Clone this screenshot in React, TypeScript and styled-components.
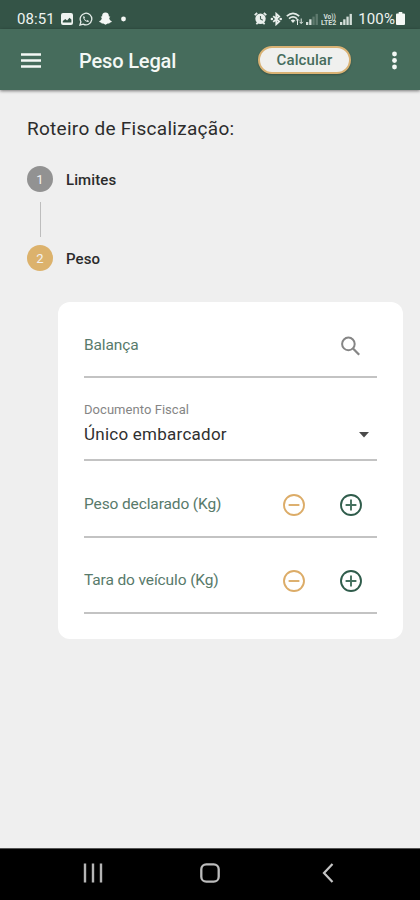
import React from "react";
import styled, { createGlobalStyle } from "styled-components";

const Global = createGlobalStyle`
  * { box-sizing: border-box; }
  body { margin: 0; background: #efefef; font-family: Roboto, sans-serif; }
`;

const Screen = styled.div`
  width: 420px;
  height: 900px;
  display: flex;
  flex-direction: column;
  overflow: hidden;
  background: #efefef;
`;

const StatusBar = styled.div`
  height: 29px;
  flex: none;
  display: flex;
  align-items: center;
  justify-content: space-between;
  padding: 8px 15px 0 17px;
  background: #345447;
  color: #eef3f0;
`;

const StatusGroup = styled.div<{ $gap: number }>`
  display: flex;
  align-items: center;
  gap: ${(p) => p.$gap}px;
  svg { display: block; }
`;

const StatusText = styled.span<{ $spacing: number }>`
  font-size: 15px;
  line-height: 18px;
  letter-spacing: ${(p) => p.$spacing}px;
  white-space: nowrap;
`;

const AppBar = styled.header`
  height: 61px;
  flex: none;
  display: flex;
  align-items: center;
  padding: 0 16px 0 21px;
  background: #466c5c;
  color: #f4f8f5;
  box-shadow: 0 1px 3px rgba(0, 0, 0, 0.5);
  z-index: 1;
`;

const IconButton = styled.button<{ $w: number; $h: number }>`
  width: ${(p) => p.$w}px;
  height: ${(p) => p.$h}px;
  padding: 0;
  border: 0;
  background: none;
  color: inherit;
  svg { display: block; }
`;

const Title = styled.h1`
  flex: 1;
  margin: 2px 0 0 38px;
  font-size: 20px;
  line-height: 24px;
  font-weight: 500;
  letter-spacing: -0.15px;
`;

const CalcButton = styled.button`
  width: 93px;
  height: 28px;
  margin-right: 35px;
  padding: 1px 0 0;
  border: 2px solid #d9b274;
  border-radius: 14px;
  background: #f0f0ee;
  color: #466c5c;
  font: 500 15px/20px Roboto, sans-serif;
  letter-spacing: 0.1px;
  box-shadow: 0 1px 2px rgba(0, 0, 0, 0.25);
`;

const Content = styled.main`
  flex: 1;
  display: flex;
  flex-direction: column;
  padding: 27px 17px 0 27px;
`;

const Heading = styled.h2`
  margin: 0;
  font-size: 19px;
  line-height: 24px;
  font-weight: 400;
  letter-spacing: 0.28px;
  color: #2c2c2c;
`;

const Step = styled.div<{ $top?: number }>`
  display: flex;
  align-items: center;
  gap: 13px;
  height: 26px;
  margin-top: ${(p) => p.$top ?? 0}px;
`;

const StepBadge = styled.span<{ $active?: boolean }>`
  width: 26px;
  height: 26px;
  border-radius: 50%;
  background: ${(p) => (p.$active ? "#dcb26c" : "#929292")};
  color: #f3f3f3;
  font-size: 13px;
  line-height: 27px;
  text-align: center;
`;

const StepLabel = styled.span`
  padding-top: 2px;
  font-size: 15px;
  font-weight: 500;
  line-height: 20px;
  letter-spacing: 0.1px;
  color: #2b2b2b;
`;

const StepLine = styled.div`
  width: 1px;
  height: 35px;
  margin: 10px 0 8px 13px;
  background: #bdbdbd;
`;

const Card = styled.section`
  width: 345px;
  height: 337px;
  margin: 31px 0 0 31px;
  padding: 0 26px;
  border-radius: 12px;
  background: #fff;
`;

const Field = styled.div<{ $height: number; $pad: number }>`
  height: ${(p) => p.$height}px;
  padding: 0 14px ${(p) => p.$pad}px 0;
  border-bottom: 2px solid #c3c3c3;
  display: flex;
  align-items: flex-end;
  justify-content: space-between;
`;

const FieldLabel = styled.label`
  font-size: 15.5px;
  line-height: 25px;
  letter-spacing: -0.12px;
  color: #587a6b;
`;

const SelectText = styled.div`
  display: flex;
  flex-direction: column;
`;

const SmallLabel = styled.span`
  font-size: 13px;
  line-height: 20px;
  letter-spacing: 0.05px;
  color: #858585;
`;

const SelectValue = styled.span`
  font-size: 17px;
  line-height: 28px;
  letter-spacing: 0.25px;
  color: #303030;
`;

const CaretBox = styled.span`
  display: flex;
  align-items: center;
  height: 26px;
  margin-right: -6px;
`;

const Actions = styled.div`
  display: flex;
  gap: 33px;
`;

const NavBar = styled.nav`
  height: 52px;
  flex: none;
  display: grid;
  grid-template-columns: 20px 20px 12px;
  align-items: center;
  column-gap: 97px;
  padding: 0 0 3px 83px;
  border-top: 1px solid #555;
  background: #000;
  svg { display: block; }
`;

const BackIcon = styled.span`
  padding-left: 5px;
`;

const Svg = ({ w, h, children }: { w: number; h: number; children: React.ReactNode }) => (
  <svg width={w} height={h} viewBox={`0 0 ${w} ${h}`} fill="none">{children}</svg>
);

const Signal = ({ level }: { level: number }) => (
  <Svg w={13} h={12}>
    {[0, 1, 2, 3].map((i) => (
      <rect key={i} x={i * 3.2} y={9 - i * 2.7} width="2.3" height={3 + i * 2.7}
        fill={i < level ? "#d5dfda" : "#5f7a6e"} />
    ))}
  </Svg>
);

const RoundIcon = ({ plus }: { plus?: boolean }) => (
  <IconButton $w={24} $h={24} aria-label={plus ? "Aumentar" : "Diminuir"}>
    <Svg w={24} h={24}>
      <circle cx="12" cy="12" r="10" stroke={plus ? "#2f5c4b" : "#dcac68"} strokeWidth="1.9" />
      <path d={plus ? "M6.6 12H17.4M12 6.6V17.4" : "M6.6 12H17.4"}
        stroke={plus ? "#467260" : "#dcac68"} strokeWidth="1.9" />
    </Svg>
  </IconButton>
);

const Stepper = ({ label, height }: { label: string; height: number }) => (
  <Field $height={height} $pad={19}>
    <FieldLabel>{label}</FieldLabel>
    <Actions>
      <RoundIcon />
      <RoundIcon plus />
    </Actions>
  </Field>
);

export default function App() {
  return (
    <Screen>
      <Global />
      <StatusBar>
        <StatusGroup $gap={6}>
          <StatusText $spacing={0.1}>08:51</StatusText>
          <Svg w={12} h={12}>
            <path fillRule="evenodd" d="M2 0h8a2 2 0 0 1 2 2v8a2 2 0 0 1-2 2H2a2 2 0 0 1-2-2V2a2 2 0 0 1 2-2ZM1.8 9.4h8.6V6.5L8.5 4.8 6.1 7.6 4.3 6 1.8 8Z" fill="#eef3f0" />
          </Svg>
          <Svg w={14} h={14}>
            <path d="M1 13 1.9 9.8A5.8 5.8 0 1 1 4.2 12.1Z" stroke="#e4ece8" strokeWidth="1.3" />
            <path d="M4.8 3.8C3.4 5.2 4.6 7.3 5.8 8.4S9 10.7 10.2 9.2L8.6 8.1 7.7 8.8C6.5 8.2 5.9 7.5 5.4 6.5L6 5.5Z" fill="#e4ece8" />
          </Svg>
          <Svg w={13} h={13}>
            <path d="M6.5.5C8.8.5 10 2.2 9.9 4.4L11.3 4.5 10.2 6.3C10.5 7.8 11.5 8.8 12.8 9.3L12.5 10.1 10.8 10.7 10.2 11.6H8.7L6.5 12.8 4.3 11.6H2.8L2.2 10.7.5 10.1.2 9.3C1.5 8.8 2.5 7.8 2.8 6.3L1.7 4.5 3.1 4.4C3 2.2 4.2.5 6.5.5Z" fill="#f4f7f5" />
          </Svg>
          <Svg w={13} h={6}><circle cx="5.5" cy="3" r="2.4" fill="#f4f7f5" /></Svg>
        </StatusGroup>
        <StatusGroup $gap={2}>
          <Svg w={13} h={13}>
            <path d="M.7 3.2 3.2 1M12.3 3.2 9.8 1M2.4 12.3l1.3-1.6M10.6 12.3l-1.3-1.6" stroke="#e9efec" strokeWidth="1.7" />
            <circle cx="6.5" cy="6.8" r="5.2" fill="#e9efec" />
            <path d="M6.5 3.9V7L8.8 8.3" stroke="#48665a" strokeWidth="1.1" />
          </Svg>
          <Svg w={15} h={14}>
            <path d="M4.2 4.1 10.2 9.6 7.3 12.2V1.8L10.2 4.4 4.2 9.9" stroke="#e9efec" strokeWidth="1.8" />
            <circle cx="2.900" cy="7" r="1.3" fill="#e9efec" /><circle cx="11.700" cy="7" r="1.3" fill="#e9efec" />
          </Svg>
          <Svg w={18} h={13}>
            <path d="M.8 4.2C4.8.6 9.2.6 13.2 4.2M3 6.6C5.8 4.2 8.2 4.2 11 6.6" stroke="#e4ebe7" strokeWidth="1.7" />
            <path d="M4.8 8.4C6.5 7.1 7.5 7.1 9.2 8.4L7 11Z" fill="#e4ebe7" />
            <path d="M11.500 7v6M9.800 8.700 11.500 7l1.700 1.700M15.200 6.500v5M13.500 9.800 15.200 11.500l1.700-1.700" stroke="#e4ebe7" strokeWidth="1" />
          </Svg>
          <Signal level={2} />
          <Svg w={17} h={14}>
            <text x="2.500" y="6.500" fill="#d5dfda" fontFamily="Roboto, sans-serif" fontSize="6.5" fontWeight="700">Vo))</text>
            <text x="0" y="13" fill="#d5dfda" fontFamily="Roboto, sans-serif" fontSize="7" fontWeight="700">LTE2</text>
          </Svg>
          <Signal level={4} />
          <StatusGroup $gap={1}>
            <Svg w={2} h={1}><></></Svg>
            <StatusText $spacing={0.1}>100%</StatusText>
            <Svg w={9} h={13}>
              <path d="M2.7 0h3.6v1.6H8A1 1 0 0 1 9 2.6V12a1 1 0 0 1-1 1H1a1 1 0 0 1-1-1V2.6a1 1 0 0 1 1-1h1.7Z" fill="#f4f7f5" />
            </Svg>
          </StatusGroup>
        </StatusGroup>
      </StatusBar>
      <AppBar>
        <IconButton $w={20} $h={16} aria-label="Menu">
          <Svg w={20} h={16}>
            <path d="M0 2.5H20M0 8.5H20M0 14.500H20" stroke="#f4f8f5" strokeWidth="2.3" />
          </Svg>
        </IconButton>
        <Title>Peso Legal</Title>
        <CalcButton>Calcular</CalcButton>
        <IconButton $w={18} $h={20} aria-label="Mais opções">
          <Svg w={18} h={20}>
            {[4, 10.5, 17].map((y) => <circle key={y} cx="8.500" cy={y} r="2.4" fill="#f4f8f5" />)}
          </Svg>
        </IconButton>
      </AppBar>
      <Content>
        <Heading>Roteiro de Fiscalização:</Heading>
        <Step $top={25}>
          <StepBadge>1</StepBadge>
          <StepLabel>Limites</StepLabel>
        </Step>
        <StepLine />
        <Step>
          <StepBadge $active>2</StepBadge>
          <StepLabel>Peso</StepLabel>
        </Step>
        <Card>
          <Field $height={76} $pad={18}>
            <FieldLabel>Balança</FieldLabel>
            <IconButton $w={24} $h={24} aria-label="Buscar">
              <Svg w={24} h={24}>
                <circle cx="9.4" cy="9.900" r="6.3" stroke="#858585" strokeWidth="2" />
                <path d="m14 14.500 6.2 6.2" stroke="#858585" strokeWidth="2.3" />
              </Svg>
            </IconButton>
          </Field>
          <Field $height={83} $pad={11}>
            <SelectText>
              <SmallLabel>Documento Fiscal</SmallLabel>
              <SelectValue>Único embarcador</SelectValue>
            </SelectText>
            <CaretBox>
              <Svg w={10} h={6}><path d="M0 0H10L5 5.5Z" fill="#4a4a4a" /></Svg>
            </CaretBox>
          </Field>
          <Stepper label="Peso declarado (Kg)" height={77} />
          <Stepper label="Tara do veículo (Kg)" height={76} />
        </Card>
      </Content>
      <NavBar>
        <Svg w={20} h={20}>
          <path d="M2 .5V19.500M10 .5V19.500M18 .5V19.500" stroke="#b5b5b5" strokeWidth="2.4" />
        </Svg>
        <Svg w={20} h={20}>
          <rect x="1.3" y="1.300" width="17.400" height="17.400" rx="5" stroke="#bcbcbc" strokeWidth="2.300" />
        </Svg>
        <BackIcon>
          <Svg w={12} h={20}>
            <path d="M10.500 1 2 10 10.500 19" stroke="#c4c4c4" strokeWidth="2.200" />
          </Svg>
        </BackIcon>
      </NavBar>
    </Screen>
  );
}
